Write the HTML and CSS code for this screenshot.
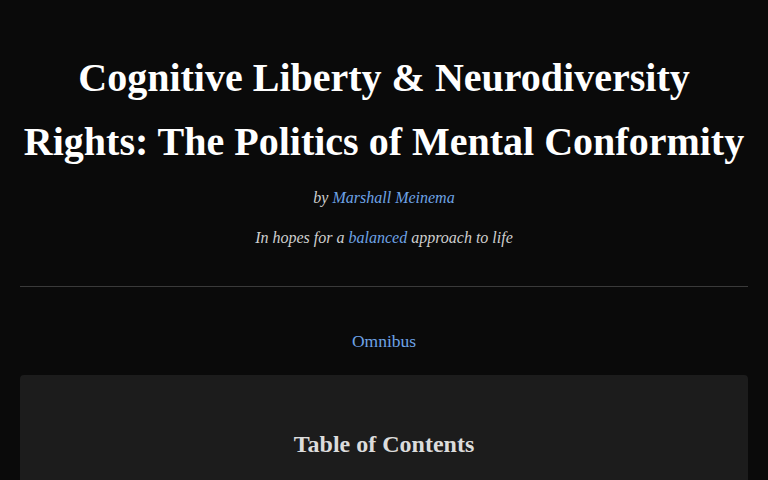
FILE: index.html
```html
<!DOCTYPE html>
<html lang="en">
<head>
<meta charset="utf-8">
<title>Cognitive Liberty &amp; Neurodiversity Rights</title>
<link rel="stylesheet" href="styles.css">
</head>
<body>
<header class="header">
  <h1 class="title">Cognitive Liberty &amp; Neurodiversity Rights: The Politics of Mental Conformity</h1>
  <p class="byline">by <a href="#">Marshall Meinema</a></p>
  <p class="tagline">In hopes for a <a href="#">balanced</a> approach to life</p>
</header>
<hr class="rule">
<nav class="series"><a href="#">Omnibus</a></nav>
<section class="toc">
  <h2 class="toc-title">Table of Contents</h2>
</section>
</body>
</html>
```
FILE: styles.css
```css
html { background: #0a0a0a; }
body {
  margin: 0;
  padding: 0 20px;
  background: #0a0a0a;
  color: #e6e6e6;
  font-family: "Liberation Serif", "Times New Roman", serif;
}
a { color: #6ea3e6; text-decoration: none; }
.header { text-align: center; padding-top: 46px; }
.title {
  margin: 0;
  font-size: 40px;
  line-height: 64px;
  font-weight: bold;
  color: #ffffff;
}
.byline {
  margin: 13px 0 0;
  font-size: 16px;
  line-height: 22px;
  font-style: italic;
  color: #cfcfcf;
}
.tagline {
  margin: 18px 0 0;
  font-size: 16px;
  line-height: 22px;
  font-style: italic;
  color: #cfcfcf;
}
.rule {
  margin: 37px 0 0;
  border: 0;
  border-top: 1px solid #3a3a3a;
  height: 0;
}
.series {
  text-align: center;
  margin-top: 42px;
  font-size: 17.5px;
  line-height: 24px;
}
.toc {
  margin-top: 22px;
  background: #1c1c1c;
  border-radius: 4px;
  padding: 55px 20px 40px;
  min-height: 200px;
}
.toc-title {
  margin: 0;
  text-align: center;
  font-size: 24px;
  line-height: 28px;
  color: #dcdcdc;
}
```
